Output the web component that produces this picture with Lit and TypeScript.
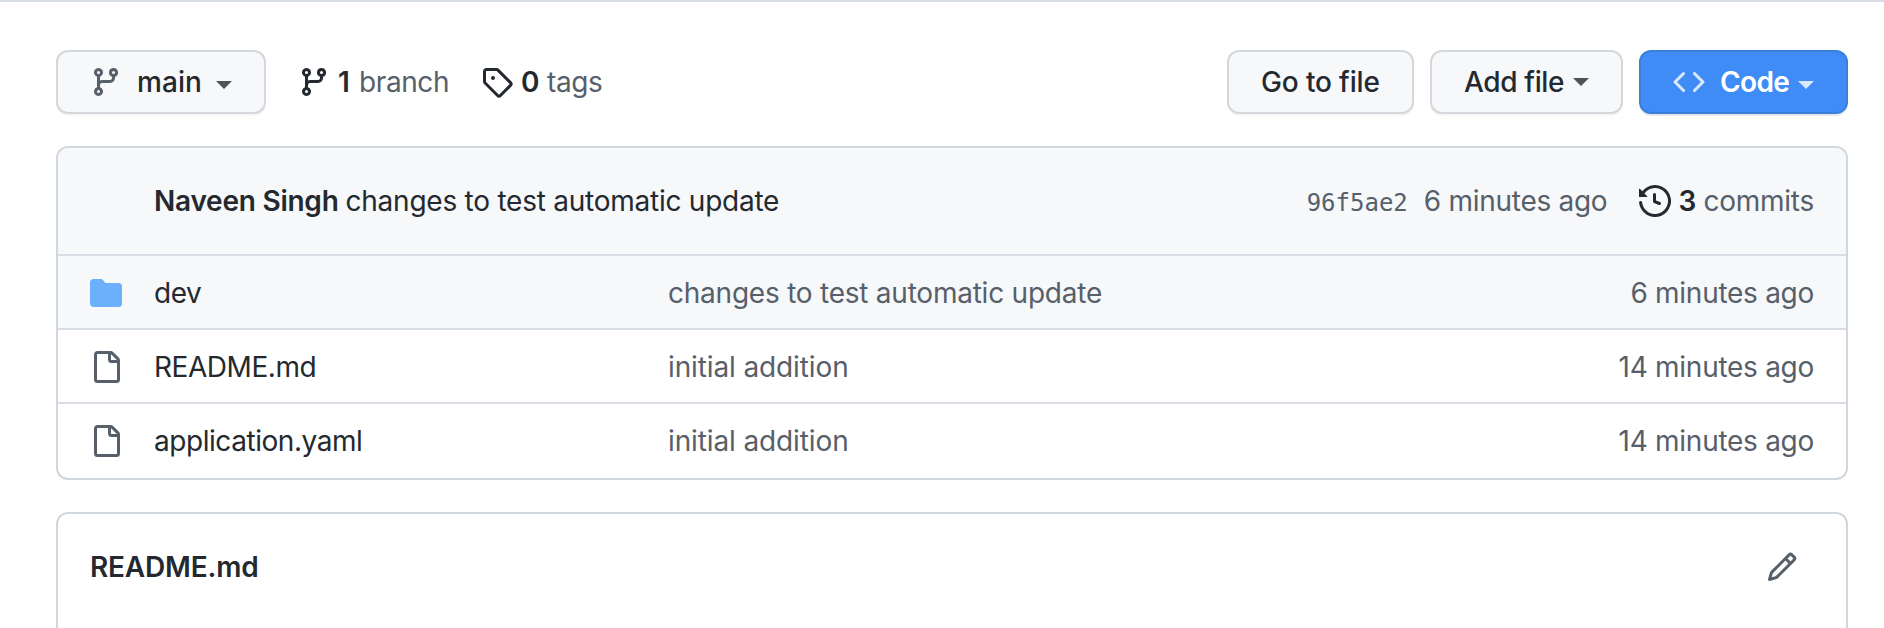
import { LitElement, html, css } from "lit";
import { customElement, property } from "lit/decorators.js";

const ICONS: Record<string, string> = {
  branch:
    "M11.75 2.5a.75.75 0 100 1.5.75.75 0 000-1.5zm-2.25.75a2.25 2.25 0 113 2.122V6A2.5 2.5 0 0110 8.5H6a1 1 0 00-1 1v1.128a2.251 2.251 0 11-1.5 0V5.372a2.25 2.25 0 111.5 0v1.836A2.492 2.492 0 016 7h4a1 1 0 001-1v-.628A2.25 2.25 0 019.5 3.25zM4.25 12a.75.75 0 100 1.5.75.75 0 000-1.5zM3.5 3.25a.75.75 0 111.5 0 .75.75 0 01-1.5 0z",
  tag: "M2.5 7.775V2.75a.25.25 0 01.25-.25h5.025a.25.25 0 01.177.073l6.25 6.25a.25.25 0 010 .354l-5.025 5.025a.25.25 0 01-.354 0l-6.25-6.25a.25.25 0 01-.073-.177zm-1.5 0V2.75C1 1.784 1.784 1 2.75 1h5.025c.464 0 .91.184 1.238.513l6.25 6.25a1.75 1.75 0 010 2.474l-5.026 5.026a1.75 1.75 0 01-2.474 0l-6.25-6.25A1.75 1.75 0 011 7.775zM6 5a1 1 0 100 2 1 1 0 000-2z",
  code: "M4.72 3.22a.75.75 0 011.06 1.06L2.06 8l3.72 3.72a.75.75 0 11-1.06 1.06L.47 8.53a.75.75 0 010-1.06l4.25-4.25zm6.56 0a.75.75 0 10-1.06 1.06L13.94 8l-3.72 3.72a.75.75 0 101.06 1.06l4.25-4.25a.75.75 0 000-1.06l-4.25-4.25z",
  history:
    "M1.643 3.143L.427 1.927A.25.25 0 000 2.104V5.75c0 .138.112.25.25.25h3.646a.25.25 0 00.177-.427L2.715 4.215a6.5 6.5 0 11-1.18 4.458.75.75 0 10-1.493.154 8.001 8.001 0 101.6-5.684zM7.75 4a.75.75 0 01.75.75v2.992l2.028.812a.75.75 0 01-.557 1.392l-2.5-1A.75.75 0 017 8.25v-3.5A.75.75 0 017.75 4z",
  folder:
    "M1.75 1A1.75 1.75 0 000 2.75v10.5C0 14.216.784 15 1.75 15h12.5A1.75 1.75 0 0016 13.25v-8.5A1.75 1.75 0 0014.25 3h-6.5a.25.25 0 01-.2-.1l-.9-1.2c-.33-.44-.85-.7-1.4-.7h-3.5z",
  file: "M2 1.75C2 .784 2.784 0 3.75 0h6.586c.464 0 .909.184 1.237.513l2.914 2.914c.329.328.513.773.513 1.237v9.586A1.75 1.75 0 0113.25 16h-9.5A1.75 1.75 0 012 14.25V1.75zm1.75-.25a.25.25 0 00-.25.25v12.5c0 .138.112.25.25.25h9.5a.25.25 0 00.25-.25V6h-2.75A1.75 1.75 0 019 4.25V1.5H3.75zm6.75.062V4.25c0 .138.112.25.25.25h2.688a.252.252 0 00-.011-.013l-2.914-2.914a.272.272 0 00-.013-.011z",
  pencil:
    "M11.013 1.427a1.75 1.75 0 012.474 0l1.086 1.086a1.75 1.75 0 010 2.474l-8.61 8.61c-.21.21-.47.364-.756.445l-3.251.93a.75.75 0 01-.927-.928l.929-3.25a1.75 1.75 0 01.445-.758l8.61-8.61zm1.414 1.06a.25.25 0 00-.354 0L10.811 3.75l1.439 1.44 1.263-1.263a.25.25 0 000-.354l-1.086-1.086zM11.189 6.25L9.75 4.81l-6.286 6.287a.25.25 0 00-.064.108l-.558 1.953 1.953-.558a.249.249 0 00.108-.064l6.286-6.286z",
};

@customElement("oct-icon")
export class OctIcon extends LitElement {
  @property() name = "file";
  static styles = css`
    :host { display: block; flex: none; width: 32px; height: 32px; }
    svg { display: block; width: 100%; height: 100%; fill: currentColor; }
  `;
  render() {
    return html`<svg viewBox="0 0 16 16" aria-hidden="true">
      <path fill-rule="evenodd" d=${ICONS[this.name]}></path>
    </svg>`;
  }
}

interface Entry {
  kind: "folder" | "file";
  name: string;
  message: string;
  age: string;
}

const ENTRIES: Entry[] = [
  { kind: "folder", name: "dev", message: "changes to test automatic update", age: "6 minutes ago" },
  { kind: "file", name: "README.md", message: "initial addition", age: "14 minutes ago" },
  { kind: "file", name: "application.yaml", message: "initial addition", age: "14 minutes ago" },
];

@customElement("app-root")
export class AppRoot extends LitElement {
  static styles = css`
    :host {
      display: block;
      box-sizing: border-box;
      height: 628px;
      overflow: hidden;
      padding: 48px 36px 0 56px;
      border-top: 2px solid #d8dee4;
      background: #fff;
      color: #24292f;
      font: 400 28px/42px Inter, "Liberation Sans", sans-serif;
      letter-spacing: -0.19px;
      white-space: nowrap;
    }
    *, *::before, *::after { box-sizing: border-box; }
    .toolbar { display: flex; align-items: center; height: 64px; margin-bottom: 32px; }
    .btn {
      display: flex;
      align-items: center;
      height: 64px;
      border: 2px solid #d4d8dc;
      border-radius: 12px;
      background: #f6f8fa;
      box-shadow: 0 2px 0 rgba(27, 31, 36, 0.04);
      font-weight: 500;
    }
    .branch-btn { width: 210px; padding-left: 32px; letter-spacing: 0.1px; }
    .branch-btn oct-icon { color: #57606a; }
    .branch-btn .label { margin-left: 15px; }
    .caret {
      width: 0;
      height: 0;
      border: 8px solid transparent;
      border-top-color: currentColor;
      border-bottom: 0;
      opacity: 0.8;
    }
    .branch-btn .caret { margin: 6px 0 0 14px; }
    .stat { display: flex; align-items: center; color: #57606a; }
    .stat oct-icon, .stat b { color: #24292f; }
    b { font-weight: 600; }
    .branches { margin-left: 32px; }
    .branches b { margin-left: 8px; width: 21px; }
    .branches .word { width: 92px; letter-spacing: -0.4px; }
    .tags { margin-left: 30px; }
    .tags b { margin-left: 8px; width: 26px; }
    .tags .word { letter-spacing: -0.4px; }
    .actions { display: flex; gap: 16px; margin-left: auto; }
    .goto { width: 187px; padding-left: 32px; letter-spacing: -0.14px; }
    .add { width: 193px; padding-left: 32px; letter-spacing: -0.35px; }
    .add .caret { margin: 0 0 1px 9px; }
    .code {
      width: 209px;
      padding-left: 32px;
      border-color: #3a7fdc;
      background: #3f8cf7;
      box-shadow: 0 2px 0 rgba(27, 31, 36, 0.1);
      color: #fff;
      font-weight: 600;
      letter-spacing: -0.6px;
    }
    .code oct-icon { opacity: 0.8; margin-right: 15px; }
    .code .caret { margin: 6px 0 0 9px; }
    .box { border: 2px solid #d0d7de; border-radius: 12px; background: #fff; overflow: hidden; }
    .commit {
      display: flex;
      align-items: center;
      height: 106px;
      padding: 0 32px 0 96px;
      background: #f6f8fa;
      letter-spacing: -0.24px;
    }
    .author { margin-right: 7px; }
    .meta { display: flex; align-items: center; margin-left: auto; color: #57606a; }
    .hash { padding-top: 4px; font: 24px/42px "DejaVu Sans Mono", monospace; letter-spacing: 0; margin-right: 16px; }
    .age { letter-spacing: -0.28px; }
    .commits { margin-left: 32px; }
    .commits b { margin-left: 7px; width: 25px; }
    .row {
      display: grid;
      grid-template-columns: 64px 514px 1fr auto;
      align-items: center;
      height: 74px;
      padding: 2px 32px 0;
      border-top: 2px solid #d8dee4;
    }
    .row:last-child { height: 76px; padding: 0 32px; }
    .row.hover { background: #f6f8fa; }
    .row oct-icon { color: #57606a; }
    .row .folder { color: #6cb0fc; }
    .row .name { letter-spacing: -0.45px; }
    .row .msg, .row .age { color: #57606a; }
    .row .msg { letter-spacing: -0.12px; }
    .row.hover .msg { letter-spacing: -0.23px; }
    .readme {
      display: flex;
      align-items: center;
      justify-content: space-between;
      height: 140px;
      margin-top: 32px;
      padding: 0 48px 32px 32px;
      border-bottom: 0;
      border-radius: 12px 12px 0 0;
    }
    .readme oct-icon { color: #57606a; }
  `;

  render() {
    return html`
      <div class="toolbar">
        <div class="btn branch-btn">
          <oct-icon name="branch"></oct-icon><span class="label">main</span><i class="caret"></i>
        </div>
        <div class="stat branches">
          <oct-icon name="branch"></oct-icon><b>1</b><span class="word">branch</span>
        </div>
        <div class="stat tags">
          <oct-icon name="tag"></oct-icon><b>0</b><span class="word">tags</span>
        </div>
        <div class="actions">
          <div class="btn goto">Go to file</div>
          <div class="btn add">Add file<i class="caret"></i></div>
          <div class="btn code"><oct-icon name="code"></oct-icon>Code<i class="caret"></i></div>
        </div>
      </div>
      <div class="box">
        <div class="commit">
          <b class="author">Naveen Singh</b><span>changes to test automatic update</span>
          <div class="meta">
            <span class="hash">96f5ae2</span><span class="age">6 minutes ago</span>
            <div class="stat commits">
              <oct-icon name="history"></oct-icon><b>3</b><span>commits</span>
            </div>
          </div>
        </div>
        ${ENTRIES.map(
          (e, i) => html`<div class="row ${i === 0 ? "hover" : ""}">
            <oct-icon class=${e.kind} name=${e.kind}></oct-icon>
            <span class="name">${e.name}</span>
            <span class="msg">${e.message}</span>
            <span class="age">${e.age}</span>
          </div>`
        )}
      </div>
      <div class="box readme"><b>README.md</b><oct-icon name="pencil"></oct-icon></div>
    `;
  }
}
